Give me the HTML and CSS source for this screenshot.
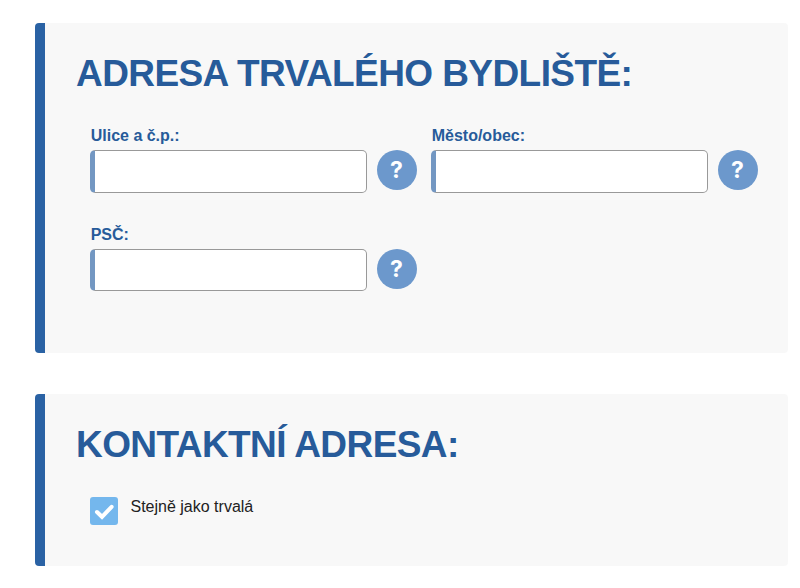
FILE: index.html
```html
<!DOCTYPE html>
<html lang="cs">
<head>
<meta charset="utf-8">
<title>Adresa</title>
<link rel="stylesheet" href="styles.css">
</head>
<body>
<section class="panel">
  <h2>ADRESA TRVALÉHO BYDLIŠTĚ:</h2>
  <div class="fields">
    <div class="field"><label for="street">Ulice a č.p.:</label><div class="row"><input id="street" type="text"><button class="help" type="button">?</button></div></div>
    <div class="field"><label for="city">Město/obec:</label><div class="row"><input id="city" type="text"><button class="help" type="button">?</button></div></div>
    <div class="field"><label for="zip">PSČ:</label><div class="row"><input id="zip" class="short" type="text"><button class="help" type="button">?</button></div></div>
  </div>
</section>
<section class="panel contact">
  <h2>KONTAKTNÍ ADRESA:</h2>
  <div class="check">
    <span class="box"><svg viewBox="0 0 28 28" width="28" height="28"><path d="M7 15 L12 19.8 L21.6 9.8" fill="none" stroke="#fff" stroke-width="4" stroke-linecap="round"/></svg></span>
    <span class="check-label">Stejně jako trvalá</span>
  </div>
</section>
</body>
</html>
```
FILE: styles.css
```css
* { box-sizing: border-box; }
body {
  margin: 0;
  padding: 23px 12px 0 35px;
  background: #fff;
  font-family: "Liberation Sans", Arial, sans-serif;
}
.panel {
  height: 330px;
  margin-bottom: 41px;
  padding: 29px 0 0 41px;
  background: linear-gradient(90deg, #2a62a4 10px, #f8f8f8 10px);
  border-radius: 4px;
}
.contact { height: 172px; margin: 0; }
h2 {
  margin: 0;
  font-size: 37px;
  line-height: 44px;
  letter-spacing: -0.58px;
  color: #275b9a;
  white-space: nowrap;
}
.fields {
  display: grid;
  grid-template-columns: 327px 327px;
  gap: 32px 14px;
  padding: 30px 0 0 14px;
}
label {
  display: block;
  height: 24px;
  padding-left: 0.7px;
  font-size: 16px;
  font-weight: bold;
  line-height: 20px;
  color: #275b9a;
}
.row { display: flex; justify-content: space-between; }
input {
  width: 276.5px;
  height: 43px;
  border: 1px solid #999;
  border-left: 5px solid #7397c2;
  border-radius: 5px;
  background: #fff;
}
.short { height: 42px; }
.help {
  width: 40px;
  height: 40px;
  padding: 1px 1px 0 0;
  border: 0;
  border-radius: 50%;
  background: #6c98cc;
  color: #fff;
  font: 700 23px/39px Inter, sans-serif;
}
.check { display: flex; gap: 12px; padding: 30px 0 0 14px; }
.box { width: 28px; height: 28px; border-radius: 3px; background: #74b7ed; }
.box svg { display: block; }
.check-label { padding-left: 0.5px; font-size: 16px; line-height: 20px; color: #222; }
```
